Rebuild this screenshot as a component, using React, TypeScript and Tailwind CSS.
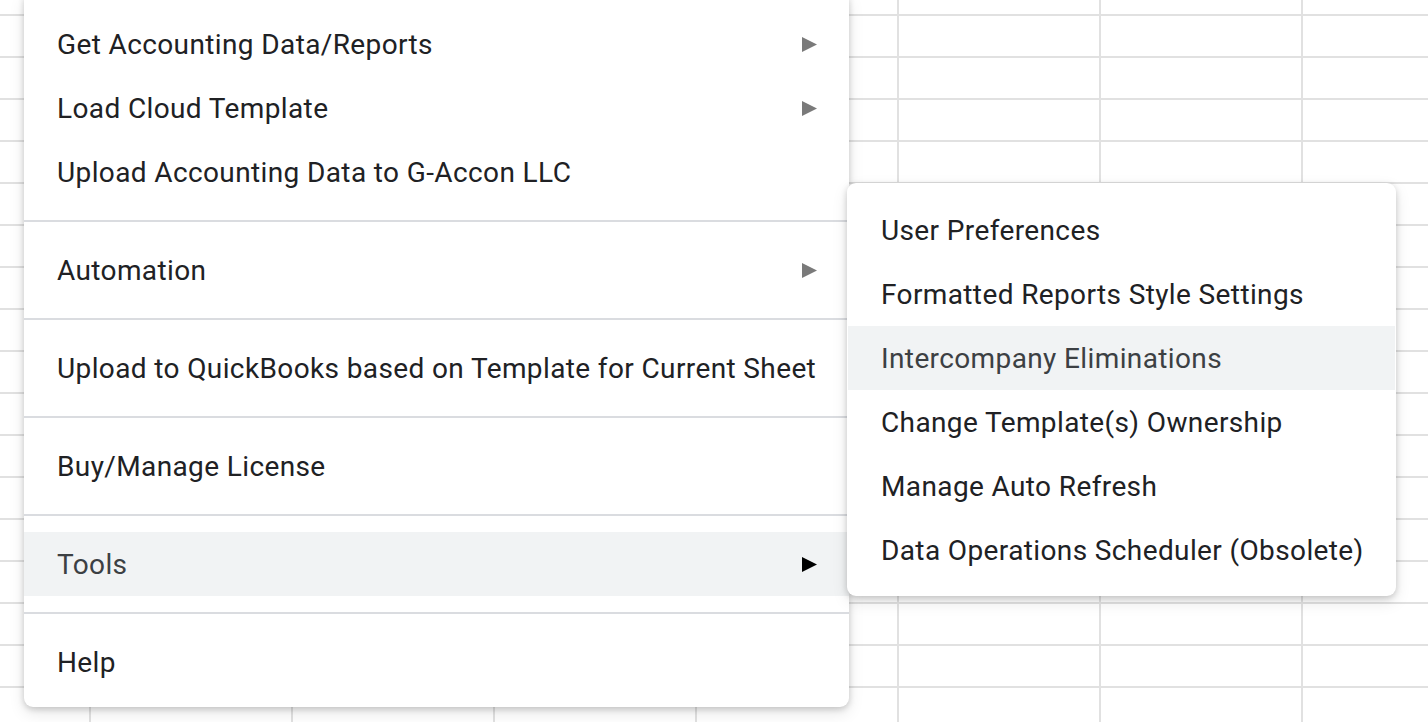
import React from "react";

type Item = { label: string; arrow?: boolean; active?: boolean };

const mainGroups: Item[][] = [
    [
        { label: "Get Accounting Data/Reports", arrow: true },
        { label: "Load Cloud Template", arrow: true },
        { label: "Upload Accounting Data to G-Accon LLC" },
    ],
    [{ label: "Automation", arrow: true }],
    [{ label: "Upload to QuickBooks based on Template for Current Sheet" }],
    [{ label: "Buy/Manage License" }],
    [{ label: "Tools", arrow: true, active: true }],
    [{ label: "Help" }],
];

const subItems: Item[] = [
    { label: "User Preferences" },
    { label: "Formatted Reports Style Settings" },
    { label: "Intercompany Eliminations", active: true },
    { label: "Change Template(s) Ownership" },
    { label: "Manage Auto Refresh" },
    { label: "Data Operations Scheduler (Obsolete)" },
];

function Arrow({ dark }: { dark?: boolean }) {
    return (
        <svg width="15" height="15" viewBox="0 0 15 15" className="shrink-0 -translate-y-[1px]">
            <path d="M0 0 L15 7.5 L0 15 Z" fill={dark ? "#000000" : "#7a7a7a"} />
        </svg>
    );
}

function MenuRow({ item }: { item: Item }) {
    return (
        <div
            className={
                "flex h-16 items-center justify-between pl-[33px] pr-[32px] pt-[2px] " +
                (item.active ? "bg-[#f1f3f4] text-[#3c4043]" : "text-[#202124]")
            }
        >
            <span className="whitespace-nowrap">{item.label}</span>
            {item.arrow && <Arrow dark={item.active} />}
        </div>
    );
}

export default function App() {
    return (
        <div
            className="relative h-[722px] w-[1428px] overflow-hidden bg-white bg-[linear-gradient(to_right,#e1e1e1_2px,transparent_2px),linear-gradient(to_bottom,#e1e1e1_2px,transparent_2px)] bg-[size:202px_42px] bg-[position:89px_14px] text-[28px] tracking-[0.38px]"
            style={{ fontFamily: "Roboto, 'Liberation Sans', sans-serif" }}
        >
            {/* main dropdown */}
            <div className="absolute left-[24px] top-[-4px] w-[825px] rounded-b-[9px] bg-white pt-4 pb-[13px] shadow-[0_2px_6px_rgba(0,0,0,0.18),0_6px_16px_rgba(0,0,0,0.1)]">
                {mainGroups.map((group, gi) => (
                    <div key={gi}>
                        {gi > 0 && (
                            <div className="flex h-[34px] items-center">
                                <div className="h-[2px] w-full bg-[#dadce0]" />
                            </div>
                        )}
                        {group.map((item) => (
                            <MenuRow key={item.label} item={item} />
                        ))}
                    </div>
                ))}
            </div>

            {/* Tools submenu */}
            <div className="absolute left-[847px] top-[183px] w-[549px] rounded-[9px] bg-white px-[1px] pt-[15px] pb-[14px] shadow-[0_2px_6px_rgba(0,0,0,0.18),0_6px_16px_rgba(0,0,0,0.1)]">
                {subItems.map((item) => (
                    <MenuRow key={item.label} item={item} />
                ))}
            </div>
        </div>
    );
}
